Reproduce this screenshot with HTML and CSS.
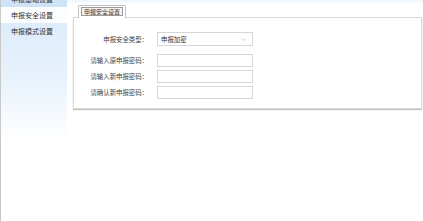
FILE: index.html
```html
<!DOCTYPE html>
<html lang="zh-CN">
<head>
    <meta charset="UTF-8">
    <title>申报安全设置</title>
    <link rel="stylesheet" href="styles.css">
</head>
<body>
    <div class="sidebar">
        <div class="menu-item">申报基础设置</div>
        <div class="menu-item active">申报安全设置</div>
        <div class="menu-item">申报模式设置</div>
    </div>

    <div class="main">
        <div class="tabs">
            <div class="tab"><span>申报安全设置</span></div>
        </div>
        <div class="panel">
            <div class="form-row first">
                <label>申报安全类型：</label>
                <div class="select">
                    <span>申报加密</span>
                    <svg class="arrow" width="5" height="3" viewBox="0 0 5 3">
                        <path d="M0.5 0.5 L2.5 2.5 L4.5 0.5" fill="none" stroke="#c4c4c4" stroke-width="0.8"/>
                    </svg>
                </div>
            </div>
            <div class="form-row">
                <label>请输入原申报密码：</label>
                <input type="password">
            </div>
            <div class="form-row">
                <label>请输入新申报密码：</label>
                <input type="password">
            </div>
            <div class="form-row">
                <label>请确认新申报密码：</label>
                <input type="password">
            </div>
        </div>
    </div>
</body>
</html>
```

FILE: styles.css
```css
body {
    margin: 0;
    padding: 0;
    display: flex;
    height: 221px;
    overflow: hidden;
    font-family: "Noto Sans CJK SC", "Noto Sans", sans-serif;
    color: #333;
    background: #fff;
}
.sidebar {
    width: 66px;
    border-left: 1px solid #c9c9c9;
    background: linear-gradient(to bottom, #d9eafb 0px, #e8f2fc 80px, #ffffff 140px);
    padding-top: 0;
}
.menu-item {
    height: 16px;
    line-height: 16px;
    padding-left: 10px;
    font-size: 7px;
    color: #333;
}
.menu-item:first-child {
    margin-top: -9px;
    background: #cfe3f8;
}
.menu-item.active {
    background: #fcfdff;
}
.main {
    flex: 1;
    padding: 5px 1px 0 6px;
    background: linear-gradient(to bottom, #eef5fc 0px, #ffffff 4px);
}
.tabs {
    display: flex;
    padding-left: 5px;
    margin-bottom: -1px;
}
.tab {
    border: 1px solid #c2c2c2;
    border-bottom: none;
    border-radius: 2px 2px 0 0;
    padding: 1px 2px 2px 2px;
    background: #fff;
}
.tab span {
    display: block;
    border: 1px solid #9a9a9a;
    background: #f3f3f3;
    font-size: 6px;
    line-height: 7px;
    padding: 0 2px;
    color: #333;
}
.panel {
    height: 92px;
    border: 1px solid #d8d8d8;
    box-shadow: 0 1px 1px #c4c4c4;
    padding-top: 14px;
    box-sizing: border-box;
}
.form-row {
    display: flex;
    align-items: center;
    margin-bottom: 3px;
}
.form-row.first {
    margin-bottom: 8px;
}
.form-row label {
    width: 74px;
    text-align: right;
    font-size: 6.4px;
    color: #444;
    margin-right: 9px;
}
.select,
.form-row input {
    width: 96px;
    height: 13px;
    box-sizing: border-box;
    border: 1px solid #d6d6d6;
    background: #fff;
    margin: 0;
    padding: 0;
}
.select {
    height: 14px;
    display: flex;
    align-items: center;
    justify-content: space-between;
    padding: 0 6px 0 3px;
    font-size: 6.4px;
    color: #333;
}
.arrow {
    display: block;
}
```
